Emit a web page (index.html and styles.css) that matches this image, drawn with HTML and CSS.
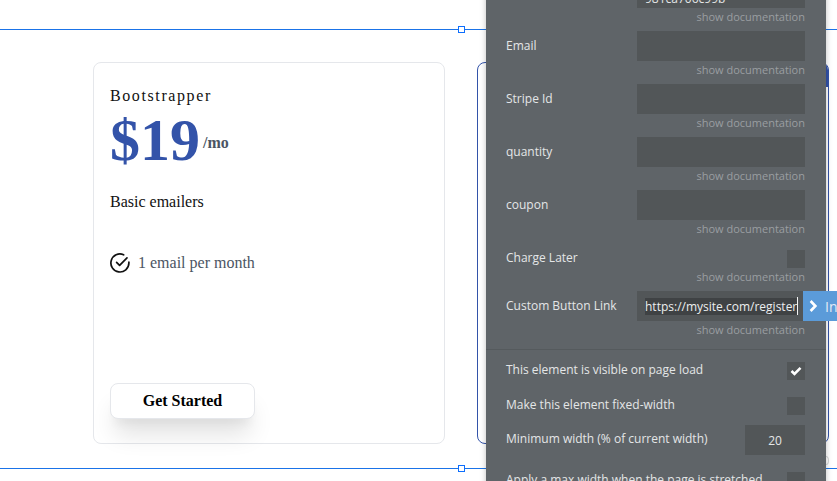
FILE: index.html
```html
<!DOCTYPE html>
<html lang="en">
<head>
<meta charset="utf-8">
<title>Pricing editor</title>
<link rel="stylesheet" href="styles.css">
</head>
<body>
<div class="canvas">
  <div class="cards">
    <section class="card">
      <h2 class="plan">Bootstrapper</h2>
      <div class="price"><span class="amount">$19</span><span class="per">/mo</span></div>
      <p class="blurb">Basic emailers</p>
      <div class="feature">
        <svg class="check" viewBox="0 0 20 20" width="20" height="20"><path d="M18.9 9.2V10a9 9 0 1 1-5.3-8.2" fill="none" stroke="#111" stroke-width="1.7" stroke-linecap="round"/><path d="M6.6 9.4l3 3 7.4-7.6" fill="none" stroke="#111" stroke-width="1.7" stroke-linecap="round" stroke-linejoin="round"/></svg>
        <span>1 email per month</span>
      </div>
      <button class="cta">Get Started</button>
    </section>
    <section class="card card-featured"><div class="tab"></div></section>
  </div>

  <div class="sel-line sel-top"><i class="handle"></i></div>
  <div class="sel-line sel-bottom"><i class="handle"></i></div>
  <div class="ghost"></div>

  <aside class="panel">
    <div class="field first"><span class="lbl"></span><div class="input clipped">981ca706c99b</div></div>
    <a class="doc">show documentation</a>
    <div class="field"><span class="lbl">Email</span><div class="input"></div></div>
    <a class="doc">show documentation</a>
    <div class="field"><span class="lbl">Stripe Id</span><div class="input"></div></div>
    <a class="doc">show documentation</a>
    <div class="field"><span class="lbl">quantity</span><div class="input"></div></div>
    <a class="doc">show documentation</a>
    <div class="field"><span class="lbl">coupon</span><div class="input"></div></div>
    <a class="doc">show documentation</a>
    <div class="field short"><span class="lbl">Charge Later</span><div class="box"></div></div>
    <a class="doc">show documentation</a>
    <div class="field link"><span class="lbl">Custom Button Link</span>
      <div class="input active"><span class="selected">https://mysite.com/register</span><span class="caret"></span>
        <div class="insert"><svg viewBox="0 0 10 12" width="10" height="12"><path d="M1.6 1l4.8 5-4.8 5" fill="none" stroke="#fff" stroke-width="2.6"/></svg><span>Insert</span></div>
      </div>
    </div>
    <a class="doc">show documentation</a>
    <hr class="rule">
    <div class="opt"><span class="lbl">This element is visible on page load</span><div class="box"><svg viewBox="0 0 12 10" width="12" height="10"><path d="M1.5 5l3 3 6-6.2" fill="none" stroke="#fff" stroke-width="2.6"/></svg></div></div>
    <div class="opt"><span class="lbl">Make this element fixed-width</span><div class="box"></div></div>
    <div class="opt tall"><span class="lbl">Minimum width (% of current width)</span><div class="input num">20</div></div>
    <div class="opt"><span class="lbl">Apply a max width when the page is stretched</span><div class="box"></div></div>
  </aside>
</div>
</body>
</html>
```
FILE: styles.css
```css
* { box-sizing: border-box; }
html, body { margin: 0; height: 100%; }
body { background: #fff; overflow: hidden; }
.canvas { position: relative; width: 837px; height: 481px; overflow: hidden; font-family: "Liberation Serif", serif; }

.cards { display: flex; gap: 32px; padding: 62px 0 0 93px; }
.card { position: relative; flex: none; width: 352px; height: 382px; border: 1px solid #e5e7eb; border-radius: 8px; padding: 23px 16px 24px 16px; display: flex; flex-direction: column; align-items: flex-start; }
.card-featured { border-color: #3353a9; overflow: hidden; }
.tab { position: absolute; top: 0; right: 0; width: 60px; height: 24px; background: #3353a9; }
.plan { margin: 0; font-size: 16px; line-height: 20px; font-weight: 400; letter-spacing: 1.6px; color: #111; }
.price { display: flex; align-items: flex-start; margin-top: 4px; color: #3353a9; }
.amount { font-size: 60px; line-height: 60px; font-weight: 700; }
.per { font-size: 16px; line-height: 20px; font-weight: 700; color: #4b5563; margin: 23px 0 0 3px; }
.blurb { margin: 20px 0 0; font-size: 16px; line-height: 24px; color: #111; }
.feature { display: flex; align-items: center; gap: 8px; margin-top: 37px; font-size: 16px; line-height: 24px; color: #4b5563; }
.check { flex: none; }
.cta { margin-top: auto; width: 145px; height: 36px; background: #fff; border: 1px solid #e5e7eb; border-radius: 8px; font: 700 16px/20px "Liberation Serif", serif; color: #000; box-shadow: 0 20px 25px -5px rgba(0,0,0,.12), 0 10px 10px -5px rgba(0,0,0,.05); padding: 0; }

.sel-line { position: absolute; left: 0; right: 0; height: 1px; background: #1a73e8; }
.sel-top { top: 29px; }
.sel-bottom { top: 468px; }
.handle { position: absolute; left: 458px; top: -3px; width: 7px; height: 7px; background: #fff; border: 1px solid #0d6efd; }
.ghost { position: absolute; left: 823px; top: 456px; width: 6px; height: 9px; border: 1px solid #d4d5d6; border-radius: 50%; }

.panel { position: absolute; left: 486px; top: -22px; width: 340px; height: 540px; padding: 0 21px 0 20px; background: #5f6468; box-shadow: 0 0 6px rgba(0,0,0,.25); font-family: "Open Sans", sans-serif; font-size: 12px; color: #e4e6e7; }
.field { display: flex; justify-content: space-between; align-items: center; height: 30px; }
.lbl { white-space: nowrap; margin-bottom: 2px; }
.input { width: 168px; height: 30px; background: #525658; }
.clipped { padding: 0 8px; line-height: 42px; overflow: hidden; }
.doc { display: block; height: 23px; line-height: 17px; text-align: right; font-size: 11px; color: #9a9ea1; }
.short { height: 18px; margin-top: 7px; }
.short .lbl, .opt .lbl { margin-bottom: 3px; }
.box { width: 18px; height: 18px; flex: none; background: #525658; display: flex; align-items: center; justify-content: center; }
.active { position: relative; display: flex; align-items: center; padding-left: 8px; }
.selected { background: #3f4244; color: #eceeef; line-height: 17px; white-space: nowrap; }
.caret { width: 1px; height: 18px; background: #f2f2f2; flex: none; }
.insert { position: absolute; left: 166px; top: 0; width: 60px; height: 30px; display: flex; align-items: center; gap: 6px; padding-left: 6px; background: #5b9bd9; color: #e2ecf6; font-size: 14px; }
.insert svg { flex: none; }
.rule { margin: 5px -21px 0 -20px; height: 1px; border: 0; background: #555a5d; }
.opt { display: flex; justify-content: space-between; align-items: center; height: 18px; margin-top: 17px; }
.rule + .opt { margin-top: 12px; }
.opt.tall { height: 30px; margin-top: 10px; }
.num { width: 60px; text-align: center; line-height: 31px; }
```
